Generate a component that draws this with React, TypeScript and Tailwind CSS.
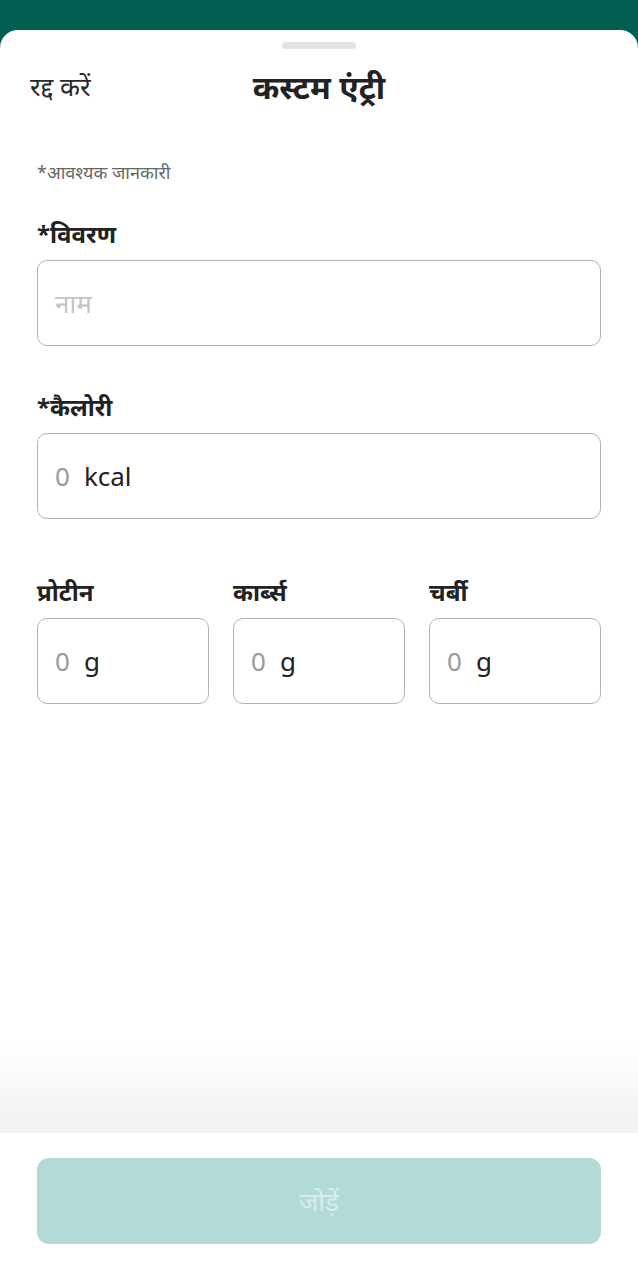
import React from 'react'

const font = { fontFamily: '"Noto Sans", "Noto Sans Devanagari", Roboto, sans-serif' }

const UnitInput = ({ unit }: { unit: string }) => (
  <div className="flex h-[86px] items-center gap-[14px] rounded-[10px] border-[1.5px] border-[#b3b3b3] bg-white px-[17px] text-[26px]">
    <span className="text-[#9a9a9a]">0</span>
    <span className="text-[#222]">{unit}</span>
  </div>
)

const App = () => {
  return (
    <div className="flex h-[1280px] w-[638px] flex-col bg-[#035e52]" style={font}>
      <div className="h-[30px] shrink-0" />
      <div className="flex flex-1 flex-col rounded-t-[18px] bg-white">
        {/* drag handle */}
        <div className="flex justify-center pt-[12px]">
          <div className="h-[7px] w-[74px] rounded-full bg-[#e3e3e3]" />
        </div>

        {/* header */}
        <div className="relative mt-[17px] flex h-[42px] items-center justify-center">
          <span className="absolute left-[30px] top-[1px] text-[26px] text-[#2a2a2a]">रद्द करें</span>
          <span className="text-[32px] font-bold text-[#222]">कस्टम एंट्री</span>
        </div>

        <div className="flex flex-1 flex-col px-[37px]">
          <div className="mt-[51px] text-[18px] text-[#666]">*आवश्यक जानकारी</div>

          <div className="mt-[30px] text-[24px] font-bold text-[#222]">*विवरण</div>
          <div className="mt-[8px] flex h-[86px] items-center rounded-[10px] border-[1.5px] border-[#b3b3b3] px-[17px] text-[26px] text-[#c4c4c4]">
            नाम
          </div>

          <div className="mt-[43px] text-[24px] font-bold text-[#222]">*कैलोरी</div>
          <div className="mt-[8px]">
            <UnitInput unit="kcal" />
          </div>

          <div className="mt-[55px] grid grid-cols-3 gap-[24px]">
            {['प्रोटीन', 'कार्ब्स', 'चर्बी'].map((l) => (
              <div key={l} className="flex flex-col">
                <div className="text-[24px] font-bold text-[#222]">{l}</div>
                <div className="mt-[8px]">
                  <UnitInput unit="g" />
                </div>
              </div>
            ))}
          </div>

          <div className="flex-1" />
        </div>

        {/* bottom fade + button */}
        <div className="h-[95px] bg-gradient-to-b from-white to-[#f1f1f1]" />
        <div className="bg-white px-[37px] pt-[25px] pb-[36px]">
          <div className="flex h-[86px] items-center justify-center rounded-[12px] bg-[#b2dad7] text-[26px] text-[#d8eeec]">
            जोड़ें
          </div>
        </div>
      </div>
    </div>
  )
}

export default App
